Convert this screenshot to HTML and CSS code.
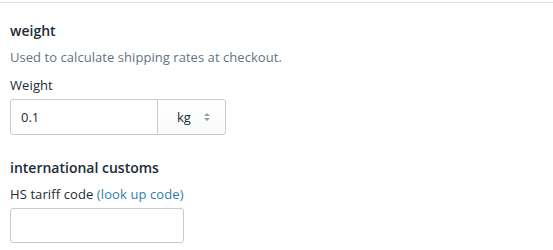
FILE: index.html
```html
<!DOCTYPE html>
<html>
<head>
<meta charset="utf-8">
<link rel="stylesheet" href="styles.css">
</head>
<body>
<div class="section">
  <h2 class="heading">weight</h2>
  <p class="help">Used to calculate shipping rates at checkout.</p>
  <label class="label">Weight</label>
  <div class="connected">
    <div class="field field-left"><span class="value">0.1</span></div>
    <div class="select">
      <span class="unit">kg</span>
      <svg class="arrows" width="8" height="12" viewBox="0 0 8 12"><path d="M4 2 L7 5 H1 Z M4 10 L7 7 H1 Z" fill="#919eab"/></svg>
    </div>
  </div>
  <h2 class="heading heading-2">international customs</h2>
  <label class="label label-2">HS tariff code <a class="link">(look up code)</a></label>
  <div class="field field-solo"></div>
</div>
</body>
</html>
```

FILE: styles.css
```css
html, body {
  margin: 0;
  padding: 0;
  background: #ffffff;
}
body {
  font-family: "Open Sans", "Noto Sans", sans-serif;
  color: #212b36;
}
.section {
  margin-top: 2px;
  border-top: 1px solid #dfe3e8;
  padding: 18px 10px 0 10px;
}
.heading {
  margin: 0;
  font-size: 14px;
  line-height: 20px;
  font-weight: 600;
  color: #212b36;
}
.heading-2 {
  margin-top: 23px;
}
.help {
  margin: 6px 0 0 0;
  font-size: 13px;
  line-height: 20px;
  letter-spacing: 0.05px;
  color: #637381;
}
.label {
  display: block;
  margin-top: 8px;
  font-size: 13px;
  line-height: 20px;
  letter-spacing: 0.1px;
  color: #212b36;
}
.label-2 {
  margin-top: 6px;
}
.link {
  color: #2f7db0;
}
.connected {
  display: flex;
  margin-top: 4px;
  width: 216px;
  height: 36px;
}
.field {
  box-sizing: border-box;
  border: 1px solid #c4cdd5;
  border-radius: 3px;
  background: #fff;
  height: 36px;
  display: flex;
  align-items: center;
}
.field-left {
  width: 148px;
  border-radius: 3px 0 0 3px;
  padding-left: 10px;
  font-size: 13px;
}
.field-solo {
  margin-top: 4px;
  width: 174px;
  height: 35px;
}
.select {
  box-sizing: border-box;
  width: 69px;
  height: 36px;
  margin-left: -1px;
  border: 1px solid #c4cdd5;
  border-radius: 0 3px 3px 0;
  background: linear-gradient(#ffffff, #f9fafb);
  display: flex;
  align-items: center;
  font-size: 13px;
  padding-left: 19px;
  gap: 12px;
}
.arrows {
  display: block;
}
```
